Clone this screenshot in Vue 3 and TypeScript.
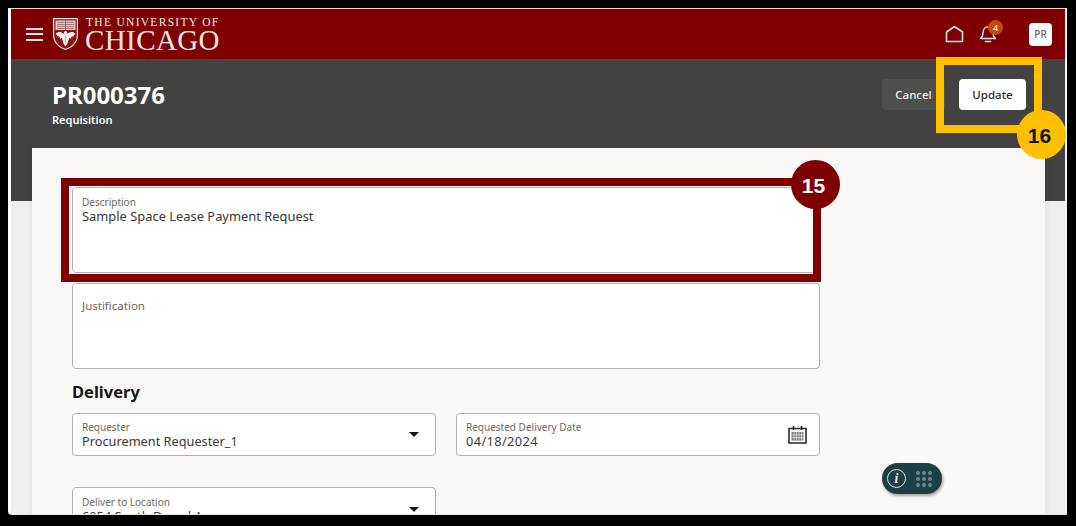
<script setup lang="ts">
import { computed } from 'vue'

interface Callout {
  id: string
  label: string
}

const callouts: Callout[] = [
  { id: 'red', label: '15' },
  { id: 'gold', label: '16' }
]

const notificationCount = 4
const gridDots = computed(() => Array.from({ length: 9 }, (_, i) => i))
</script>

<template>
  <div class="page">
    <div class="frame">
      <header class="topbar">
        <div class="brand">
          <button class="menu" aria-label="Menu">
            <span></span><span></span><span></span>
          </button>
          <svg class="seal" width="27" height="34" viewBox="0 0 27 34">
            <path d="M1 1H26V18C26 26 20 31 13.5 33C7 31 1 26 1 18Z" fill="#f0e6e3" />
            <path d="M2.2 2.2H24.8V18C24.8 25.4 19.4 29.9 13.5 31.8C7.6 29.9 2.2 25.4 2.2 18Z" fill="#8a1616" />
            <rect x="3.5" y="3.5" width="20" height="9.5" fill="#dcd0cc" />
            <path d="M5 5.5H22M5 7.5H22M5 9.5H22M5 11.5H22M13.5 3.5V13" stroke="#91605e" stroke-width="0.8" />
            <path d="M13.5 14C12.2 14 11.6 15.4 12.3 16.8L9.5 15.4C7 14.4 5 15 4 16.6C4.4 18 5 19.2 5.6 19.4L6.4 18.6L6.8 20.8L7.8 19.8L8.4 22L9.6 20.8L10.6 23.6L11.4 26.6L13.5 29.6L15.6 26.6L16.4 23.6L17.4 20.8L18.6 22L19.2 19.8L20.2 20.8L20.6 18.6L21.4 19.4C22 19.2 22.6 18 23 16.6C22 15 20 14.4 17.5 15.4L14.7 16.8C15.4 15.4 14.8 14 13.5 14Z" fill="#f6f0ee" />
            <path d="M13.5 19V25" stroke="#b88" stroke-width="0.8" />
          </svg>
          <div class="wordmark">
            <span class="wordmark-top">THE UNIVERSITY OF</span>
            <span class="wordmark-main">CHICAGO</span>
          </div>
        </div>
        <div class="tools">
          <svg class="home" width="19" height="18" viewBox="0 0 19 18" fill="none">
            <path d="M1.5 16.5V7L9.5 1.5L17.5 7V16.5Z" stroke="#e6e3e6" stroke-width="1.6" stroke-linejoin="round" />
          </svg>
          <div class="bell">
            <svg width="18" height="18" viewBox="0 0 18 18" fill="none">
              <path d="M1.5 13.5C3.5 12 4 10.5 4 8C4 4.5 6 2 9 2C12 2 14 4.5 14 8C14 10.5 14.5 12 16.5 13.5Z" stroke="#eceaec" stroke-width="1.5" stroke-linejoin="round" />
              <path d="M6.5 16.5H11.5" stroke="#eceaec" stroke-width="1.6" stroke-linecap="round" />
            </svg>
            <span class="bell-count">{{ notificationCount }}</span>
          </div>
          <div class="avatar">PR</div>
        </div>
      </header>

      <section class="hero">
        <div>
          <h1>PR000376</h1>
          <p>Requisition</p>
        </div>
        <div class="actions">
          <button class="btn btn-ghost">Cancel</button>
          <button class="btn btn-solid">Update</button>
        </div>
      </section>

      <main class="content">
        <form class="sheet" @submit.prevent>
          <div class="field field-area">
            <label>Description</label>
            <div class="value">Sample Space Lease Payment Request</div>
          </div>
          <div class="field field-area field-justify">
            <label>Justification</label>
          </div>

          <h2>Delivery</h2>
          <div class="grid">
            <div class="field field-line">
              <div>
                <label>Requester</label>
                <div class="value">Procurement Requester_1</div>
              </div>
              <span class="caret"></span>
            </div>
            <div class="field field-line">
              <div>
                <label>Requested Delivery Date</label>
                <div class="value value-date">04/18/2024</div>
              </div>
              <svg class="calendar" width="19" height="19" viewBox="0 0 19 19" fill="none">
                <path d="M1 3.5H18V18H1Z" stroke="#2b2927" stroke-width="1.6" />
                <path d="M5.5 1V5M13.5 1V5" stroke="#2b2927" stroke-width="1.6" />
                <path d="M3.5 7H15.5V15.5H3.5Z" fill="#77757a" />
                <path d="M6 7V15.5M8.5 7V15.5M11 7V15.5M13.5 7V15.5M3.5 9.8H15.5M3.5 12.6H15.5" stroke="#f2f2f2" stroke-width="0.7" />
              </svg>
            </div>
            <div class="field field-line field-location">
              <div>
                <label>Deliver to Location</label>
                <div class="value">6054 South Drexel Avenue</div>
              </div>
              <span class="caret"></span>
            </div>
          </div>
        </form>
      </main>
    </div>

    <div class="pill">
      <span class="pill-info">i</span>
      <div class="pill-dots">
        <span v-for="d in gridDots" :key="d"></span>
      </div>
    </div>

    <template v-for="c in callouts" :key="c.id">
      <div class="callout-box" :class="`box-${c.id}`"></div>
      <div class="callout-badge" :class="`badge-${c.id}`">{{ c.label }}</div>
    </template>
  </div>
</template>

<style>
html,
body {
  margin: 0;
  background: #000;
}
</style>

<style scoped>
.page {
  position: relative;
  width: 1076px;
  height: 526px;
  overflow: hidden;
  background: #000;
  font-family: "Noto Sans", "Open Sans", sans-serif;
  box-sizing: border-box;
  padding: 8px 9px 11px 8px;
}

.frame {
  height: 100%;
  box-sizing: border-box;
  overflow: hidden;
  background: #f0efed;
  border-top: 1px solid #f3d9c4;
  border-left: 3px solid #fff;
  border-right: 2px solid #f4f4f4;
  border-bottom: 1px solid #e4e4e4;
  border-bottom-left-radius: 4px;
}

.topbar {
  height: 50px;
  background: #7f0000;
  display: flex;
  align-items: center;
  justify-content: space-between;
  padding: 0 13px 0 15px;
}

.brand {
  display: flex;
  align-items: center;
}

.menu {
  width: 17px;
  height: 13px;
  padding: 0;
  border: 0;
  background: none;
  display: flex;
  flex-direction: column;
  justify-content: space-between;
  margin-right: 9px;
}

.menu span {
  display: block;
  height: 2px;
  background: #efe6e6;
}

.seal {
  display: block;
  margin-right: 7px;
}

.wordmark {
  display: flex;
  flex-direction: column;
  font-family: "Liberation Serif", serif;
  color: #f1e7e4;
}

.wordmark-top {
  font-size: 11.5px;
  line-height: 12px;
  letter-spacing: 1.3px;
  white-space: nowrap;
}

.wordmark-main {
  font-size: 29px;
  line-height: 25px;
  letter-spacing: 0.4px;
  margin-left: -1px;
}

.tools {
  display: flex;
  align-items: center;
}

.home {
  display: block;
  margin-right: 15px;
}

.bell {
  position: relative;
  width: 18px;
  height: 18px;
  margin-right: 32px;
}

.bell svg {
  display: block;
}

.bell-count {
  position: absolute;
  top: -5px;
  left: 9px;
  width: 15px;
  height: 15px;
  border-radius: 50%;
  background: #c4470f;
  color: #f5e2d8;
  font-size: 9px;
  font-weight: 600;
  line-height: 15px;
  text-align: center;
}

.avatar {
  width: 23px;
  height: 23px;
  border-radius: 4px;
  background: #fff;
  color: #666;
  font-size: 10px;
  font-weight: 500;
  line-height: 23px;
  text-align: center;
}

.hero {
  height: 142px;
  box-sizing: border-box;
  background: #424242;
  color: #fff;
  display: flex;
  justify-content: space-between;
  align-items: flex-start;
  padding: 20px 39px 0 41px;
}

.hero h1 {
  margin: 0;
  font-size: 24px;
  line-height: 32px;
  font-weight: 700;
}

.hero p {
  margin: 1px 0 0;
  font-size: 11px;
  line-height: 16px;
  font-weight: 600;
}

.actions {
  display: flex;
  gap: 14px;
}

.btn {
  font-family: inherit;
  height: 31px;
  border: 0;
  border-radius: 4px;
  font-size: 11.5px;
  font-weight: 500;
}

.btn-ghost {
  width: 63px;
  background: #4e4e4c;
  color: #f2f2f2;
}

.btn-solid {
  width: 67px;
  background: #fff;
  color: #2c2a28;
}

.content {
  margin: -53px 20px 0 21px;
  background: #f9f8f6;
  box-shadow: 0 0 8px rgba(0, 0, 0, 0.08);
  height: 400px;
  padding: 39px 0 0 40px;
  box-sizing: border-box;
}

.sheet {
  width: 748px;
}

.field {
  box-sizing: border-box;
  background: #fff;
  border: 1px solid #b4b1ae;
  border-radius: 4px;
  padding: 0 9px;
}

.field label {
  display: block;
  font-size: 10px;
  line-height: 12px;
  color: #6b6865;
}

.value {
  font-size: 12.75px;
  line-height: 16px;
  color: #3a3836;
  white-space: nowrap;
}

.value-date {
  letter-spacing: 0.4px;
}

.field-area {
  height: 86px;
  padding-top: 8px;
}

.field-area .value {
  font-size: 12.9px;
}

.field-justify {
  margin-top: 10px;
  padding-top: 16px;
}

.field-justify label {
  font-size: 11.5px;
}

h2 {
  margin: 12px 0 10px;
  font-size: 16.5px;
  line-height: 22px;
  font-weight: 700;
  color: #161513;
}

.grid {
  display: grid;
  grid-template-columns: 364px 364px;
  column-gap: 20px;
  row-gap: 31px;
}

.field-line {
  height: 43px;
  display: flex;
  align-items: center;
  justify-content: space-between;
  padding-right: 16px;
}

.field-location {
  padding-top: 2px;
}

.caret {
  width: 0;
  height: 0;
  border-left: 5px solid transparent;
  border-right: 5px solid transparent;
  border-top: 5px solid #161513;
}

.calendar {
  display: block;
  margin-right: -4px;
}

.pill {
  position: absolute;
  left: 882px;
  top: 463px;
  width: 60px;
  height: 31px;
  border-radius: 16px;
  background: #1c3f44;
  box-shadow: 1px 2px 3px rgba(0, 0, 0, 0.35);
  display: flex;
  align-items: center;
  padding-left: 5px;
  box-sizing: border-box;
}

.pill-info {
  width: 17px;
  height: 17px;
  border: 1.5px solid #e3e6e4;
  border-radius: 50%;
  color: #e3e6e4;
  font-family: "Liberation Serif", serif;
  font-style: italic;
  font-weight: 700;
  font-size: 14px;
  line-height: 17px;
  text-align: center;
}

.pill-dots {
  margin-left: 10px;
  display: grid;
  grid-template-columns: repeat(3, 4px);
  gap: 2px;
}

.pill-dots span {
  width: 4px;
  height: 4px;
  border-radius: 50%;
  background: #6f8a8c;
}

.callout-box {
  position: absolute;
  box-sizing: border-box;
  border-style: solid;
  border-width: 8px;
}

.box-red {
  left: 61px;
  top: 178px;
  width: 760px;
  height: 104px;
  border-color: #7f0000;
}

.box-gold {
  left: 936px;
  top: 57px;
  width: 106px;
  height: 76px;
  border-color: #ffc000;
}

.callout-badge {
  position: absolute;
  box-sizing: border-box;
  width: 49px;
  height: 49px;
  padding-right: 4px;
  border-radius: 50%;
  font-family: "Liberation Sans", Arial, sans-serif;
  font-weight: 700;
  font-size: 21px;
  line-height: 51px;
  text-align: center;
}

.badge-red {
  left: 791px;
  top: 160px;
  background: #7f0000;
  color: #fff;
}

.badge-gold {
  left: 1017px;
  top: 110px;
  background: #ffc000;
  color: #111;
}
</style>
